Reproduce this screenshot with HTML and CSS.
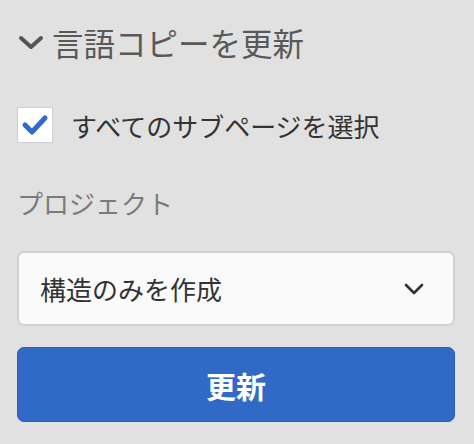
FILE: index.html
```html
<!DOCTYPE html>
<html lang="ja">
<head>
    <meta charset="UTF-8">
    <meta name="viewport" content="width=device-width, initial-scale=1.0">
    <title>言語コピーを更新</title>
    <link rel="stylesheet" href="styles.css">
</head>
<body>
    <div class="panel">
        <div class="panel-title">
            <svg class="title-chevron" width="26" height="16" viewBox="0 0 26 16">
                <path d="M3 3 L13 12 L23 3" fill="none" stroke="#555" stroke-width="4" stroke-linecap="round" stroke-linejoin="round"/>
            </svg>
            <span>言語コピーを更新</span>
        </div>

        <label class="check-row">
            <span class="checkbox">
                <svg width="28" height="22" viewBox="0 0 28 22">
                    <path d="M4 11 L11 18 L24 4" fill="none" stroke="#2f6bc9" stroke-width="5" stroke-linecap="round" stroke-linejoin="round"/>
                </svg>
            </span>
            <span class="check-label">すべてのサブページを選択</span>
        </label>

        <div class="field-label">プロジェクト</div>

        <div class="select">
            <span>構造のみを作成</span>
            <svg width="20" height="12" viewBox="0 0 20 12">
                <path d="M2 2 L10 10 L18 2" fill="none" stroke="#333" stroke-width="2.6" stroke-linecap="round" stroke-linejoin="round"/>
            </svg>
        </div>

        <button class="btn">更新</button>
    </div>
</body>
</html>
```

FILE: styles.css
```css
body {
    font-family: "Noto Sans CJK JP", "Noto Sans", sans-serif;
    margin: 0;
    padding: 0;
    background-color: #e1e1e1;
}
.panel {
    padding: 22px 19px 0 17px;
}
.panel-title {
    display: flex;
    align-items: center;
    height: 40px;
    color: #595959;
    font-size: 31.5px;
}
.title-chevron {
    margin-left: 1px;
    margin-right: 8px;
    margin-top: 2px;
}
.check-row {
    display: flex;
    align-items: center;
    margin-top: 45px;
    height: 36px;
}
.checkbox {
    width: 34px;
    height: 34px;
    background-color: #fff;
    border: 1px solid #cfcfcf;
    display: flex;
    align-items: center;
    justify-content: center;
}
.check-label {
    margin-left: 18px;
    font-size: 26px;
    color: #333;
}
.field-label {
    margin-top: 40px;
    height: 40px;
    line-height: 40px;
    font-size: 26px;
    color: #7a7a7a;
}
.select {
    margin-top: 28px;
    box-sizing: border-box;
    height: 75px;
    background-color: #fafafa;
    border: 2px solid #d2d2d2;
    border-radius: 7px;
    display: flex;
    align-items: center;
    justify-content: space-between;
    padding: 0 29px 0 21px;
    font-size: 26px;
    color: #333;
}
.btn {
    display: block;
    width: 100%;
    margin-top: 21px;
    height: 75px;
    background-color: #3169c6;
    border: 1px solid #2a5eb8;
    border-radius: 7px;
    color: #fff;
    font-family: inherit;
    font-size: 30px;
    font-weight: bold;
}
```
